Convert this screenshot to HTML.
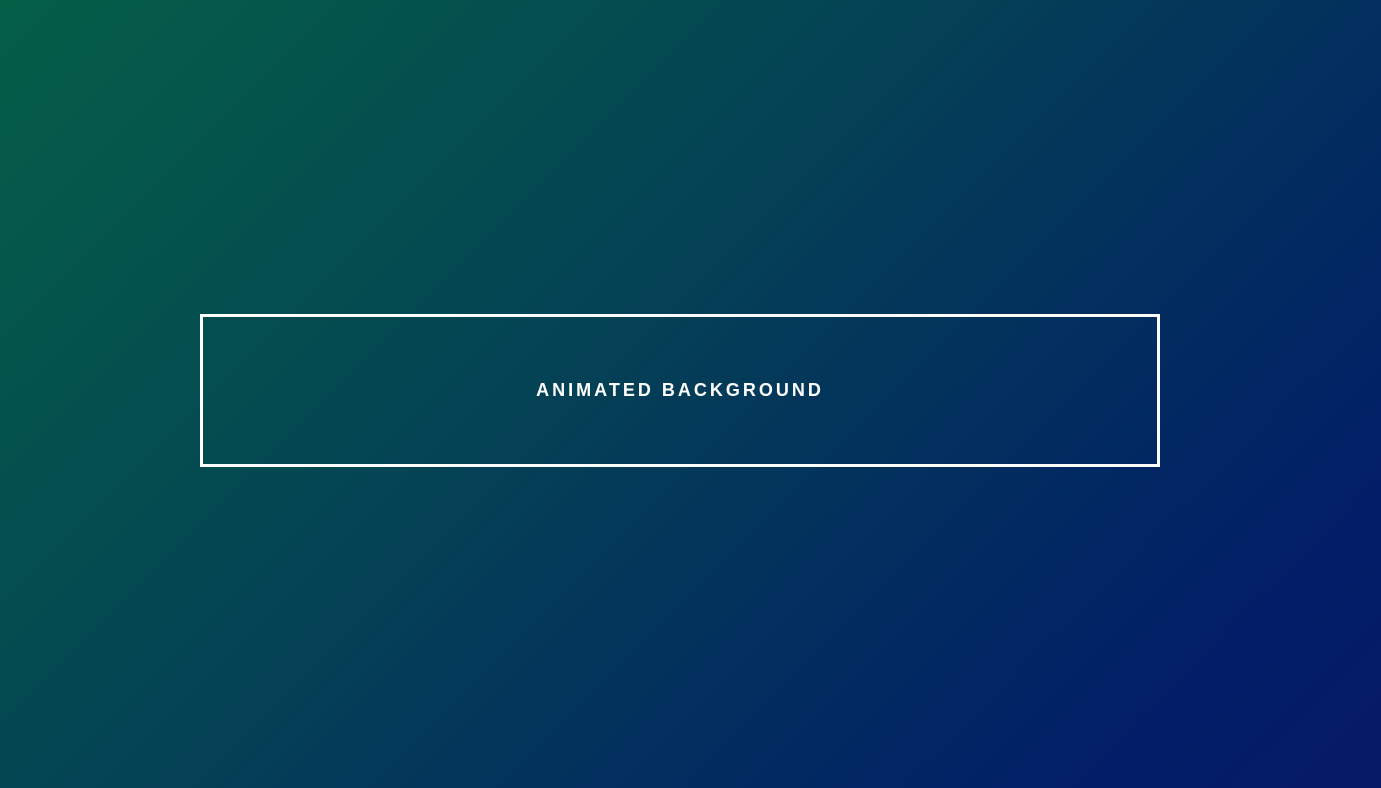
<!DOCTYPE html>
<html><head><style>
html,body{margin:0;padding:0;}
body{width:1381px;height:788px;overflow:hidden;background:linear-gradient(135deg,#055f47 0%,#044852 35%,#03335c 60%,#021f68 85%,#071a68 100%);font-family:"Liberation Sans",sans-serif;position:relative;}
.box{position:absolute;left:200px;top:314px;width:954px;height:147px;border:3px solid #fff;display:flex;align-items:center;justify-content:center;}
.box span{color:#fff;font-weight:bold;font-size:18px;letter-spacing:3px;margin-left:0;}
</style></head><body>
<div class="box"><span>ANIMATED BACKGROUND</span></div>
</body></html>
